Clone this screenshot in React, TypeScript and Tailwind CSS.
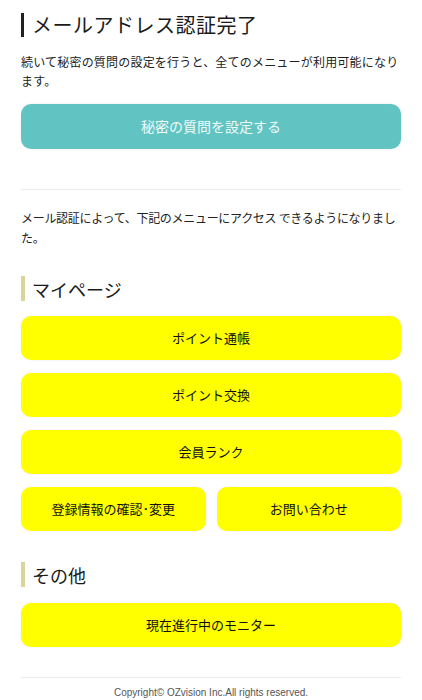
const font = { fontFamily: '"Noto Sans CJK JP", "Noto Sans", sans-serif' }

function MenuButton({ label, teal = false }: { label: string; teal?: boolean }) {
  return (
    <a
      href="#"
      className={
        teal
          ? 'flex h-[45px] items-center justify-center rounded-[10px] bg-[#62c4c2] text-[14px] text-[#eefafa] shadow-[0_0_2px_rgba(0,0,0,0.08)]'
          : 'flex h-[44px] items-center justify-center rounded-[10px] bg-[#ffff00] text-[13px] text-[#111] shadow-[0_0_2px_rgba(0,0,0,0.08)]'
      }
    >
      {label}
    </a>
  )
}

function SectionTitle({ children }: { children: string }) {
  return (
    <h2 className="flex h-[25px] items-center border-l-[4px] border-[#d8d49a] pl-[7px] text-[18px] leading-none text-[#1a1a1a]">
      {children}
    </h2>
  )
}

export default function App() {
  return (
    <div className="min-h-[700px] bg-white px-[21px] text-[#222]" style={font}>
      <h1 className="mt-[13px] flex h-[24px] items-center border-l-[3px] border-[#222] pl-[8px] text-[20px] leading-none tracking-[0.5px] text-[#1a1a1a]">
        メールアドレス認証完了
      </h1>

      <p className="mt-[15px] text-[12px] leading-[19px] tracking-[0.2px]">
        続いて秘密の質問の設定を行うと、全てのメニューが利用可能になります。
      </p>

      <div className="mt-[14px]">
        <MenuButton label="秘密の質問を設定する" teal />
      </div>

      <hr className="mt-[40px] border-t border-[#ececec]" />

      <p className="mt-[18px] text-[12px] leading-[20px] tracking-[-0.3px]">
        メール認証によって、下記のメニューにアクセス できるようになりました。
      </p>

      <div className="mt-[28px]">
        <SectionTitle>マイページ</SectionTitle>
      </div>

      <div className="mt-[15px] flex flex-col gap-[13px]">
        <MenuButton label="ポイント通帳" />
        <MenuButton label="ポイント交換" />
        <MenuButton label="会員ランク" />
        <div className="grid grid-cols-2 gap-[11px]">
          <MenuButton label="登録情報の確認･変更" />
          <MenuButton label="お問い合わせ" />
        </div>
      </div>

      <div className="mt-[31px]">
        <SectionTitle>その他</SectionTitle>
      </div>

      <div className="mt-[16px]">
        <MenuButton label="現在進行中のモニター" />
      </div>

      <footer className="mt-[30px] border-t border-[#ececec] pt-[8px] pb-[4px] text-center">
        <p
          className="text-[10px] leading-[14px] text-[#555]"
          style={{ fontFamily: '"Liberation Sans", Arial, sans-serif' }}
        >
          Copyright© OZvision Inc.All rights reserved.
        </p>
      </footer>
    </div>
  )
}
